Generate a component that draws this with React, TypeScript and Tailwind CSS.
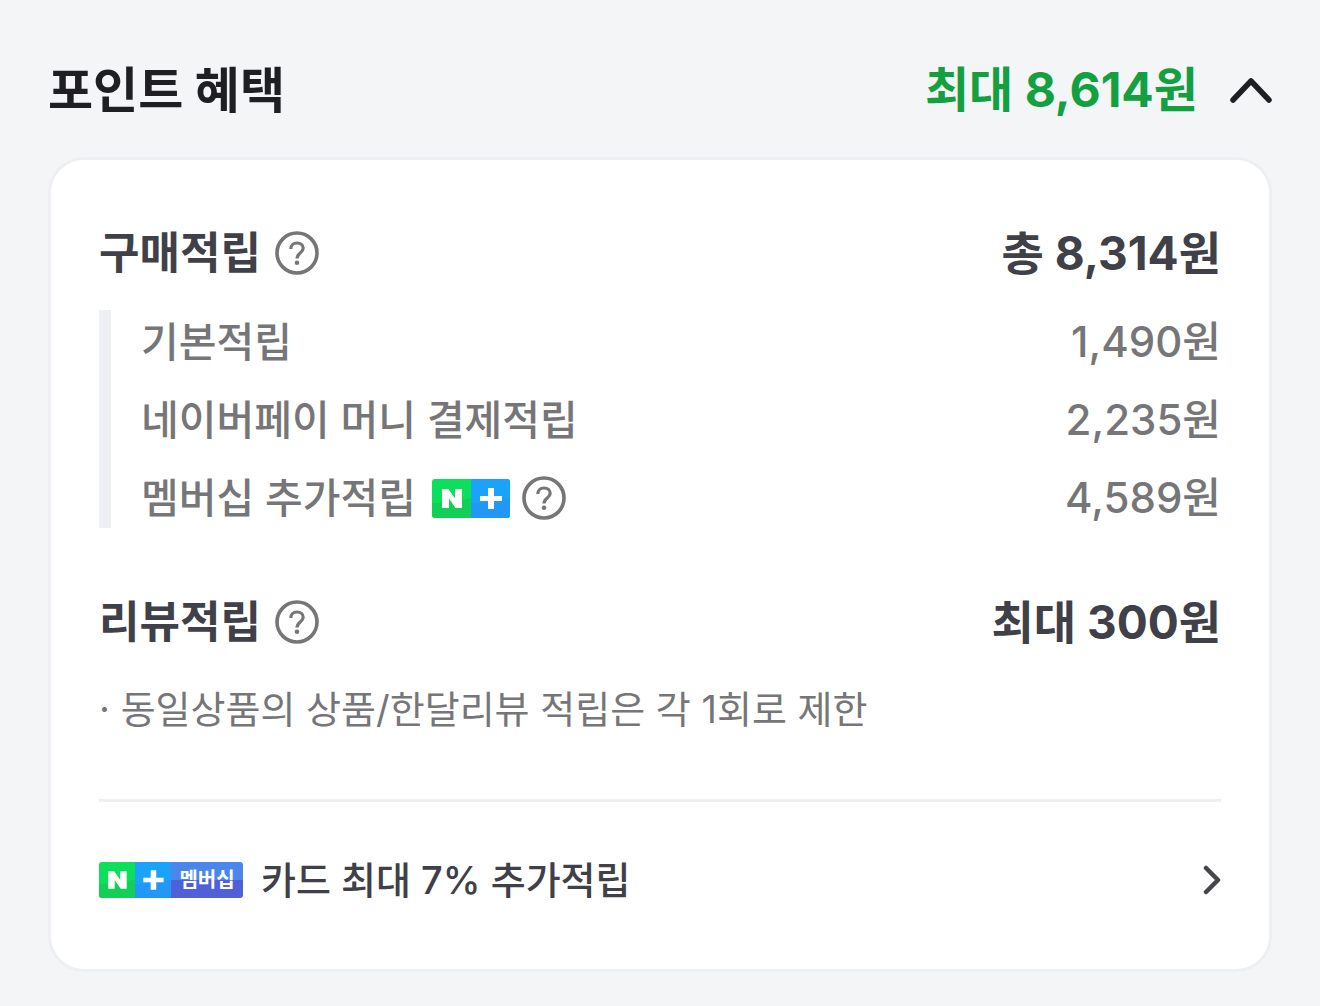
import React from "react";

const FONT = "font-[Inter,'Noto_Sans_CJK_KR',sans-serif]";

function Help({ label }: { label: string }) {
  return (
    <button type="button" aria-label={label} className="block size-11 shrink-0">
      <svg viewBox="0 0 44 44" className="size-11" fill="none" stroke="#767678" strokeWidth="3.6">
        <circle cx="22" cy="22" r="20" />
        <path strokeWidth="3.2" d="M15.800 18c0-3.800 2.600-6 6.200-6s6.200 2.100 6.200 5.300c0 4.800-6.200 4.700-6.200 10.200" />
        <circle cx="22" cy="31.700" r="2.300" fill="#767678" stroke="none" />
      </svg>
    </button>
  );
}

function NPlus({ className }: { className: string }) {
  return (
    <svg viewBox="0 0 78 39" className={className} role="img" aria-label="N+">
      <rect width="78" height="39" fill="#0cdf59" />
      <path d="M0 24C13 24 28 22 39 19v20H0z" fill="#12d055" />
      <rect x="39" width="39" height="39" fill="#1ba3f9" />
      <path d="M39 24C54 24 68 22 78 19v20H39z" fill="#2198f6" />
      <path d="M10 29V10h6.500l6.500 9.500V10h7v19h-6.500L17 19.500V29z" fill="#fff" />
      <path d="M56 9h6v8h8v5h-8v8h-6v-8h-8v-5h8z" fill="#fff" />
    </svg>
  );
}

function Row({ label, value, children }: { label: string; value: string; children?: React.ReactNode }) {
  return (
    <div className="flex items-center justify-between">
      <dt className="flex items-center">
        <span>{label}</span>
        {children}
      </dt>
      <dd className="text-[42px]">{value}</dd>
    </div>
  );
}

export default function App() {
  return (
    <main className={`${FONT} min-h-screen bg-[#f3f5f7] px-12 pt-[46px] pb-9 text-[#767678]`}>
      <section>
        <header className="flex h-[88px] items-center justify-between">
          <h2 className="text-[49px] leading-none font-bold text-[#1e1e23]">포인트 혜택</h2>
          <button type="button" aria-label="최대 8,614원 접기" className="flex items-center gap-8 text-[48px] leading-none font-bold text-[#149f40]">
            <span>최대 8,614원</span>
            <svg viewBox="0 0 42 26" className="h-[26px] w-[42px]" fill="none" stroke="#1e1e23" strokeWidth="5.500" strokeLinecap="round" strokeLinejoin="round">
              <path d="M3 23 21 4l18 19" />
            </svg>
          </button>
        </header>
        <div className="mt-[23px] rounded-[36px] border-3 border-[#eeeff3] bg-white px-12 pt-[55px] pb-[67px]">
          <dl className="flex h-[76px] items-center justify-between text-[44px] leading-none font-bold text-[#404048]">
            <dt className="flex items-center gap-3.5">구매적립<Help label="구매적립 안내" /></dt>
            <dd className="text-[46px]">총 8,314원</dd>
          </dl>
          <dl className="mt-[19px] flex flex-col gap-[34px] border-l-12 border-[#edeff2] pt-2.5 pb-2 pl-[30px] text-[41px] leading-[44px] font-medium">
            <Row label="기본적립" value="1,490원" />
            <Row label="네이버페이 머니 결제적립" value="2,235원" />
            <Row label="멤버십 추가적립" value="4,589원">
              <NPlus className="mr-3 ml-4 h-[39px] w-[78px] rounded-[3px]" />
              <Help label="멤버십 추가적립 안내" />
            </Row>
          </dl>
          <dl className="mt-14 flex h-[76px] items-center justify-between text-[44px] leading-none font-bold text-[#404048]">
            <dt className="flex items-center gap-3.5">리뷰적립<Help label="리뷰적립 안내" /></dt>
            <dd className="text-[46px]">최대 300원</dd>
          </dl>
          <p className="mt-[23px] text-[38px] leading-[52px]">· 동일상품의 상품/한달리뷰 적립은 각 1회로 제한</p>
          <hr className="mt-16 border-t-3 border-[#eeeff1]" />
          <a href="#card" className="mt-14 flex items-center text-[38px] leading-[44px] font-medium text-[#404048]">
            <NPlus className="h-9 w-[72px] rounded-l-[3px]" />
            <span className="flex h-9 w-[72px] items-center justify-center rounded-r-[3px] bg-linear-to-b from-[#4c86ea] from-50% to-[#5060d8] to-50% text-[20px] font-semibold text-white">멤버십</span>
            <span className="ml-[18px] flex-1">카드 최대 7% 추가적립</span>
            <svg viewBox="0 0 18 30" className="h-[30px] w-[18px]" fill="none" stroke="#45454c" strokeWidth="4.500" strokeLinecap="round" strokeLinejoin="round">
              <path d="m3 3 12 12L3 27" />
            </svg>
          </a>
        </div>
      </section>
    </main>
  );
}
